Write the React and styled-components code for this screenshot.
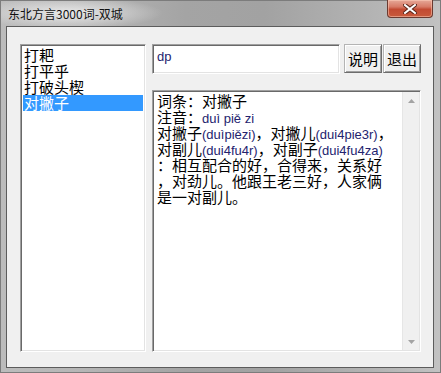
import React from 'react'
import styled, { createGlobalStyle } from 'styled-components'

const cjk = `'Noto Sans CJK SC', 'Noto Sans', sans-serif`
const latin = `'Liberation Sans', 'Noto Sans CJK SC', sans-serif`

const Global = createGlobalStyle`
  html, body {
    margin: 0;
    padding: 0;
    background: #b4b4b4;
  }
  * {
    box-sizing: border-box;
  }
`

const words = ['打耙', '打平乎', '打破头楔', '对撇子']

const lines = [
  [['c', '词条：对撇子']],
  [['c', '注音：'], ['l', 'duì piě zi']],
  [['c', '对撇子'], ['l', '(duìpiězi)'], ['c', '，对撇儿'], ['l', '(dui4pie3r)'], ['c', '，']],
  [['c', '对副儿'], ['l', '(dui4fu4r)'], ['c', '，对副子'], ['l', '(dui4fu4za)']],
  [['c', '：相互配合的好，合得来，关系好']],
  [['c', '，对劲儿。他跟王老三好，人家俩']],
  [['c', '是一对副儿。']]
]

export default function App () {
  return (
    <Window>
      <Global />
      <TitleBar>
        <Title>东北方言3000词-双城</Title>
        <CloseButton>
          <svg width='14' height='10' viewBox='0 0 14 10'>
            <path d='M2 1 L12 9 M12 1 L2 9' stroke='#5a2418' strokeWidth='4' strokeLinecap='square' />
            <path d='M2 1 L12 9 M12 1 L2 9' stroke='#ffffff' strokeWidth='2' strokeLinecap='square' />
          </svg>
        </CloseButton>
      </TitleBar>
      <Client>
        <ListBox>
          {words.map(w => (
            <ListItem key={w} selected={w === '对撇子'}>{w}</ListItem>
          ))}
        </ListBox>
        <RightPane>
          <TopRow>
            <SearchInput defaultValue='dp' readOnly />
            <Button>说明</Button>
            <Button>退出</Button>
          </TopRow>
          <Memo>
            <MemoText>
              {lines.map((line, i) => (
                <Line key={i}>
                  {line.map(([kind, text], j) => kind === 'l'
                    ? <Latin key={j}>{text}</Latin>
                    : <span key={j}>{text}</span>)}
                </Line>
              ))}
            </MemoText>
            <ScrollBar>
              <Arrow>
                <svg width='7' height='4' viewBox='0 0 7 4'><path d='M3.5 0 L7 4 L0 4 Z' fill='#a3a3a3' /></svg>
              </Arrow>
              <Arrow>
                <svg width='7' height='4' viewBox='0 0 7 4'><path d='M0 0 L7 0 L3.5 4 Z' fill='#a3a3a3' /></svg>
              </Arrow>
            </ScrollBar>
          </Memo>
        </RightPane>
      </Client>
    </Window>
  )
}

const Window = styled.div`
  width: 441px;
  height: 373px;
  display: flex;
  flex-direction: column;
  background:
    radial-gradient(ellipse 95px 16px at 68px 13px, rgba(236, 236, 236, 0.95), rgba(236, 236, 236, 0)),
    linear-gradient(90deg, #bcbcbc 0%, #b6b6b6 18%, #a4a4a4 42%, #a2a2a2 60%, #b4b4b4 85%, #c2c2c2 100%);
  box-shadow: inset 0 0 0 1px #7c7c7c;
`

const TitleBar = styled.div`
  height: 26px;
  display: flex;
  align-items: flex-start;
  flex-shrink: 0;
`

const Title = styled.div`
  margin: 6px 0 0 8px;
  font-family: 'Noto Sans CJK SC', 'Liberation Sans', sans-serif;
  font-size: 12px;
  line-height: 15px;
  color: #111;
`

const CloseButton = styled.div`
  margin-left: auto;
  margin-right: 8px;
  width: 46px;
  height: 18px;
  display: flex;
  align-items: center;
  justify-content: center;
  border: 1px solid #6b3a30;
  border-top: none;
  border-radius: 0 0 4px 4px;
  background: linear-gradient(180deg, #e6a898 0%, #d77a66 40%, #c24a32 55%, #c85a3c 100%);
  box-shadow: inset 0 0 0 1px rgba(255, 210, 190, 0.5);
`

const Client = styled.div`
  flex: 1;
  margin: 0 7px 5px 6px;
  border: 1px solid #5c5c5c;
  background: #f0f0f0;
  padding: 17px 12px 15px 13px;
  display: flex;
  gap: 6px;
`

const sunken = `
  border-top: 1px solid #a0a0a0;
  border-left: 1px solid #a0a0a0;
  border-right: 1px solid #ffffff;
  border-bottom: 1px solid #ffffff;
  box-shadow: inset 1px 1px 0 #696969, inset -1px -1px 0 #e3e3e3;
`

const ListBox = styled.div`
  width: 126px;
  ${sunken}
  background: #fff;
  padding: 2px;
  display: flex;
  flex-direction: column;
`

const ListItem = styled.div`
  height: 16px;
  line-height: 16px;
  padding-left: 1px;
  font-family: ${cjk};
  font-size: 15px;
  white-space: nowrap;
  color: ${p => (p.selected ? '#ffffff' : '#000000')};
  background: ${p => (p.selected ? '#3399ff' : 'transparent')};
`

const RightPane = styled.div`
  width: 269px;
  display: flex;
  flex-direction: column;
  gap: 16px;
`

const TopRow = styled.div`
  display: flex;
  align-items: flex-start;
`

const SearchInput = styled.input`
  width: 188px;
  height: 30px;
  margin: 0 4px 0 0;
  ${sunken}
  background: #fff;
  padding: 0 0 6px 4px;
  font-family: ${latin};
  font-size: 13px;
  color: #23236e;
  outline: none;
`

const Button = styled.div`
  width: 38px;
  height: 29px;
  margin-right: 1px;
  display: flex;
  align-items: center;
  justify-content: center;
  background: #f0f0f0;
  border-top: 1px solid #b4b4b4;
  border-left: 1px solid #b4b4b4;
  border-right: 1px solid #6d6d6d;
  border-bottom: 1px solid #6d6d6d;
  box-shadow: inset 1px 1px 0 #ffffff, inset -1px -1px 0 #a0a0a0;
  font-family: ${cjk};
  font-size: 15px;
  color: #000;
  &:last-child {
    margin-right: 0;
  }
`

const Memo = styled.div`
  flex: 1;
  ${sunken}
  background: #fff;
  padding: 1px;
  display: flex;
`

const MemoText = styled.div`
  flex: 1;
  padding: 1px 0 0 3px;
  font-family: ${cjk};
  font-size: 15px;
  line-height: 16px;
  color: #000;
`

const Line = styled.div`
  height: 16px;
  white-space: nowrap;
`

const Latin = styled.span`
  font-family: ${latin};
  font-size: 13px;
  color: #23236e;
`

const ScrollBar = styled.div`
  width: 17px;
  display: flex;
  flex-direction: column;
  justify-content: space-between;
  background: #f0f0f0;
  border-left: 1px solid #e6e6e6;
`

const Arrow = styled.div`
  height: 17px;
  display: flex;
  align-items: center;
  justify-content: center;
`
